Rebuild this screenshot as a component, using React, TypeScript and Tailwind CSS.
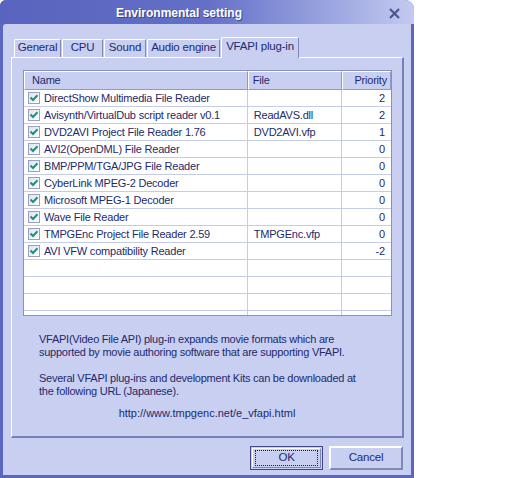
import React from "react";

const rows: [string, string, string][] = [
  ["DirectShow Multimedia File Reader", "", "2"],
  ["Avisynth/VirtualDub script reader v0.1", "ReadAVS.dll", "2"],
  ["DVD2AVI Project File Reader 1.76", "DVD2AVI.vfp", "1"],
  ["AVI2(OpenDML) File Reader", "", "0"],
  ["BMP/PPM/TGA/JPG File Reader", "", "0"],
  ["CyberLink MPEG-2 Decoder", "", "0"],
  ["Microsoft MPEG-1 Decoder", "", "0"],
  ["Wave File Reader", "", "0"],
  ["TMPGEnc Project File Reader 2.59", "TMPGEnc.vfp", "0"],
  ["AVI VFW compatibility Reader", "", "-2"],
];

function Check() {
  return (
    <div className="w-[12px] h-[12px] border border-[#9aa0c0] bg-gradient-to-br from-[#dfe3ee] to-white flex items-center justify-center shrink-0">
      <svg width="10" height="10" viewBox="0 0 10 10">
        <path d="M1.5 4.5 L4 7 L8.5 2.2" stroke="#1f8f82" strokeWidth="2" fill="none" />
      </svg>
    </div>
  );
}

const tabs = ["General", "CPU", "Sound", "Audio engine"];
const tabW = ["w-[47px]", "w-[41px]", "w-[42px]", "w-[73px]"];

export default function App() {
  return (
    <div
      className="w-[512px] h-[478px] bg-white text-[11px] text-[#1e2a6c] tracking-[-0.2px]"
      style={{ fontFamily: '"Liberation Sans", Arial, sans-serif' }}
    >
      <div className="w-[414px] h-[478px] flex flex-col bg-[#5a66c0] rounded-tr-[9px] rounded-tl-[6px] overflow-hidden">
        {/* Title bar */}
        <div className="h-[24px] shrink-0 flex items-center relative bg-gradient-to-r from-[#5864bd] via-[#6470c6] to-[#c4caf0]">
          <div className="pl-[116px] font-bold text-white text-[12px] tracking-normal pt-[2px] [text-shadow:1px_1px_0_#3a4490]">
            Environmental setting
          </div>
          <svg className="absolute right-[14px] top-[8px]" width="11" height="11" viewBox="0 0 11 11">
            <path d="M1 1 L10 10 M10 1 L1 10" stroke="#4c5690" strokeWidth="2.2" />
          </svg>
        </div>
        {/* Client */}
        <div className="flex-1 mx-[3px] mb-[3px] bg-[#c8cff1] rounded-tl-[3px] flex flex-col">
          {/* Tabs */}
          <div className="flex items-end mt-[12px] ml-[11px] h-[21px]">
            {tabs.map((t, i) => (
              <div
                key={t}
                className={`${tabW[i]} h-[18px] mr-[1px] border-t border-l border-white border-r border-r-[#8088b8] rounded-t-[2px] flex items-center justify-center text-[11.5px] pb-[1px]`}
              >
                {t}
              </div>
            ))}
            <div className="w-[78px] h-[21px] border-t border-l border-white border-r border-r-[#8088b8] rounded-t-[2px] flex items-center justify-center text-[11.5px] pb-[2px] relative z-10 bg-[#c8cff1] -mb-[1px]">
              VFAPI plug-in
            </div>
          </div>
          {/* Panel */}
          <div className="ml-[8px] w-[393px] h-[381px] border-t border-l border-white border-r-2 border-b-2 border-r-[#7880b8] border-b-[#7880b8] flex flex-col">
            {/* List */}
            <div className="mt-[12px] ml-[11px] w-[369px] h-[246px] shrink-0 border border-[#8890c0] bg-white overflow-hidden flex flex-col">
              <div className="h-[19px] shrink-0 flex bg-[#c8cff1]">
                <div className="w-[225px] border-t border-l border-white border-r border-r-[#9098c8] border-b border-b-[#9098c8] pl-[7px] flex items-center">Name</div>
                <div className="w-[95px] border-t border-l border-white border-r border-r-[#9098c8] border-b border-b-[#9098c8] pl-[4px] flex items-center">File</div>
                <div className="w-[49px] border-t border-l border-white border-r border-r-[#9098c8] border-b border-b-[#9098c8] pr-[3px] flex items-center justify-end">Priority</div>
              </div>
              {Array.from({ length: 14 }).map((_, i) => {
                const r = rows[i];
                return (
                  <div key={i} className="h-[17px] shrink-0 flex border-b border-[#c4cce6]">
                    <div className="w-[225px] border-r border-[#c4cce6] flex items-center gap-[4px] pl-[4px] whitespace-nowrap overflow-hidden">
                      {r && <Check />}
                      {r && <span>{r[0]}</span>}
                    </div>
                    <div className="w-[95px] border-r border-[#c4cce6] flex items-center pl-[6px] whitespace-nowrap">
                      {r ? r[1] : ""}
                    </div>
                    <div className="w-[49px] flex items-center justify-end pr-[6px]">
                      {r ? r[2] : ""}
                    </div>
                  </div>
                );
              })}
            </div>
            {/* Description */}
            <div className="ml-[27px] mt-[17px] leading-[13px] tracking-[-0.25px]">
              <p>VFAPI(Video File API) plug-in expands movie formats which are</p>
              <p>supported by movie authoring software that are supporting VFAPI.</p>
              <p className="mt-[13px]">Several VFAPI plug-ins and development Kits can be downloaded at</p>
              <p>the following URL (Japanese).</p>
            </div>
            <div className="mt-[9px] text-center leading-[13px] tracking-normal">http://www.tmpgenc.net/e_vfapi.html</div>
          </div>
          {/* Buttons */}
          <div className="flex justify-end gap-[6px] mt-[8px] mr-[8px]">
            <div className="w-[73px] h-[24px] border border-[#404880] p-[1px]">
              <div className="w-full h-full border-t border-l border-white border-r border-b border-r-[#8088b8] border-b-[#8088b8] flex items-center justify-center">
                <div className="border border-dotted border-[#202020] w-[63px] h-[16px] flex items-center justify-center text-[11.5px]">OK</div>
              </div>
            </div>
            <div className="w-[74px] h-[24px] border-t-2 border-l-2 border-white border-r-2 border-b-2 border-r-[#8088b8] border-b-[#8088b8] flex items-center justify-center text-[11.5px]">
              Cancel
            </div>
          </div>
        </div>
      </div>
    </div>
  );
}
